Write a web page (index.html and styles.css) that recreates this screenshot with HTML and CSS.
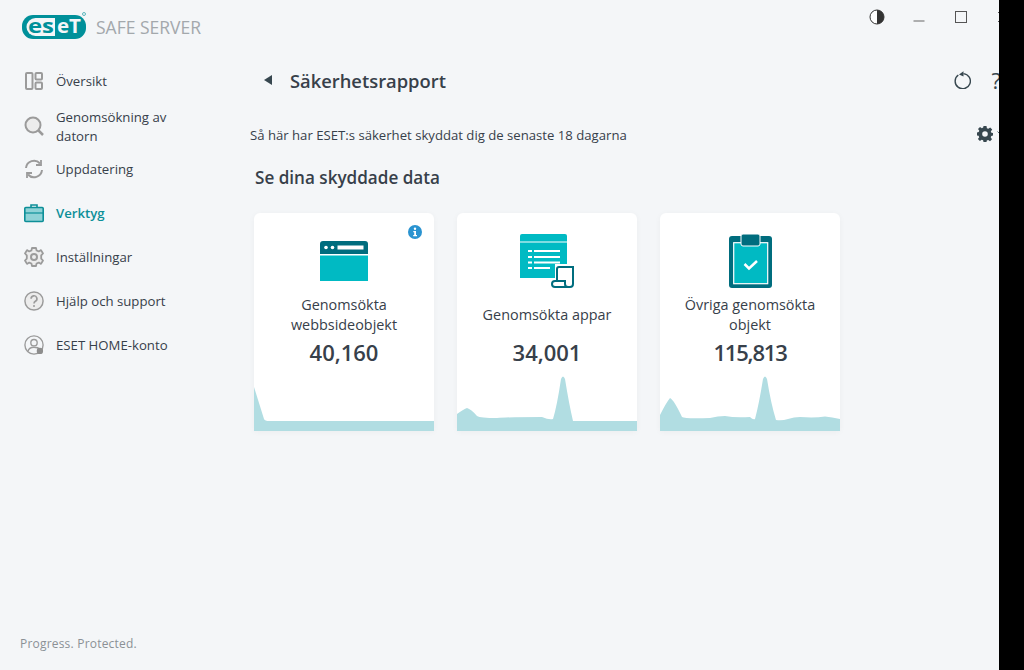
FILE: index.html
```html
<!DOCTYPE html>
<html lang="sv">
<head>
    <meta charset="UTF-8">
    <meta name="viewport" content="width=device-width, initial-scale=1.0">
    <title>Säkerhetsrapport</title>
    <link rel="stylesheet" href="styles.css">
</head>
<body>
    <div class="app">
        <aside class="sidebar">
            <div class="brand">
                <svg class="logo" width="66" height="30" viewBox="0 0 66 30">
                    <rect x="0" y="3" width="64" height="24" rx="11" fill="#00909a"/>
                    <path d="M13.500 6H33V24H13.500A9 9 0 0 1 13.500 6Z" fill="#f4f6f8"/>
                    <text x="6" y="21" class="logo-dark" textLength="26" lengthAdjust="spacingAndGlyphs">es</text>
                    <text x="35" y="21" class="logo-light" textLength="24" lengthAdjust="spacingAndGlyphs">eT</text>
                    <circle cx="62" cy="2" r="1.500" fill="none" stroke="#5fb8be" stroke-width="1"/>
                </svg>
                <span class="brand-name">SAFE SERVER</span>
            </div>
            <nav class="menu">
                <a class="menu-item">
                    <svg class="menu-icon" viewBox="0 0 20 20" fill="none" stroke="#9b9b9b" stroke-width="2"><rect x="2" y="2" width="6.500" height="16" rx="1"/><rect x="11.500" y="2" width="6.500" height="6.500" rx="1"/><rect x="11.500" y="11.500" width="6.500" height="6.500" rx="1"/></svg>
                    <span>Översikt</span>
                </a>
                <a class="menu-item tall">
                    <svg class="menu-icon" viewBox="0 0 20 20" fill="none" stroke="#9b9b9b"><circle cx="9" cy="9" r="7.500" stroke-width="2" fill="#ececec"/><path d="M14.500 14.500L19 19" stroke-width="2.500"/></svg>
                    <span>Genomsökning av datorn</span>
                </a>
                <a class="menu-item">
                    <svg class="menu-icon" viewBox="0 0 20 20" fill="none" stroke="#9b9b9b" stroke-width="2"><path d="M2 9A8 8 0 0 1 16 4.500"/><path d="M18 11A8 8 0 0 1 4 15.500"/><path d="M17 1V6H12" stroke-width="1.800"/><path d="M3 19V14H8" stroke-width="1.800"/></svg>
                    <span>Uppdatering</span>
                </a>
                <a class="menu-item active">
                    <svg class="menu-icon" viewBox="0 0 20 20"><path d="M7 4.500V2H13V4.500" fill="none" stroke="#0d8f98" stroke-width="1.600"/><rect x="0.800" y="4.500" width="18.400" height="14" rx="1" fill="#8fd2d6" stroke="#0d8f98" stroke-width="1.600"/><path d="M1 10H19" stroke="#0d8f98" stroke-width="1.200"/></svg>
                    <span>Verktyg</span>
                </a>
                <a class="menu-item">
                    <svg class="menu-icon" viewBox="0 0 20 20" fill="none" stroke="#9b9b9b"><path d="M8 1H12L12.600 3.500L14.800 4.400L17 3.100L19 6.500L17.200 8.400V11.600L19 13.500L17 16.900L14.800 15.600L12.600 16.500L12 19H8L7.400 16.500L5.200 15.600L3 16.900L1 13.500L2.800 11.600V8.400L1 6.500L3 3.100L5.200 4.400L7.400 3.500Z" stroke-width="1.800" stroke-linejoin="round" fill="#ececec"/><circle cx="10" cy="10" r="3" stroke-width="2"/></svg>
                    <span>Inställningar</span>
                </a>
                <a class="menu-item">
                    <svg class="menu-icon" viewBox="0 0 22 22" fill="none" stroke="#9b9b9b"><circle cx="11" cy="11" r="10" stroke-width="1.600" fill="#ececec"/><path d="M7.800 8.500A3.200 3.200 0 1 1 12.500 11.300C11.500 11.900 11 12.400 11 13.800" stroke-width="1.800"/><circle cx="11" cy="16.500" r="1.100" fill="#9b9b9b" stroke="none"/></svg>
                    <span>Hjälp och support</span>
                </a>
                <a class="menu-item">
                    <svg class="menu-icon" viewBox="0 0 22 22" fill="none" stroke="#9b9b9b"><circle cx="11" cy="11" r="10" stroke-width="1.500"/><circle cx="11" cy="8.500" r="3.500" stroke-width="1.500"/><path d="M4.500 18C5 14.500 8 13.500 11 13.500S16 14 17 15.500" stroke-width="1.500"/><circle cx="17.500" cy="17.500" r="3.500" fill="#8d8d8d" stroke="none"/></svg>
                    <span>ESET HOME-konto</span>
                </a>
            </nav>
            <div class="slogan">Progress. Protected.</div>
        </aside>

        <main class="content">
            <div class="window-controls">
                <svg class="win-btn" viewBox="0 0 16 16"><circle cx="8" cy="8" r="7" fill="#fff" stroke="#333" stroke-width="1"/><path d="M8 1A7 7 0 0 1 8 15Z" fill="#333"/></svg>
                <svg class="win-btn" viewBox="0 0 16 16"><path d="M2.500 12H13.500" stroke="#666" stroke-width="1"/></svg>
                <svg class="win-btn" viewBox="0 0 16 16"><rect x="2.500" y="2.500" width="11" height="11" fill="none" stroke="#555" stroke-width="1"/></svg>
                <svg class="win-btn" viewBox="0 0 16 16"><path d="M3 3L13 13M13 3L3 13" stroke="#555" stroke-width="1"/></svg>
            </div>

            <header class="page-head">
                <svg class="back" width="9" height="10" viewBox="0 0 9 10"><path d="M8 0V10L0 5Z" fill="#37474f"/></svg>
                <h1>Säkerhetsrapport</h1>
                <svg class="refresh" width="17" height="18" viewBox="0 0 17 18" fill="none"><path d="M9.500 2.600A7.600 7.600 0 1 1 4.300 4" stroke="#37474f" stroke-width="1.400"/><path d="M9.500 0.200V5.400L5 3.600Z" fill="#37474f"/></svg>
                <span class="help">?</span>
            </header>

            <div class="desc-row">
                <p class="desc">Så här har ESET:s säkerhet skyddat dig de senaste 18 dagarna</p>
                <div class="settings">
                    <svg width="16" height="16" viewBox="0 0 16 16"><path fill="#37474f" fill-rule="evenodd" d="M6.500 0H9.500L9.900 2.200L11.300 2.800L13.200 1.500L15.200 3.600L13.800 5.400L14.400 6.800L16 7V9.500L14.300 9.900L13.700 11.300L15 13.200L13 15.200L11.200 13.900L9.800 14.400L9.500 16H6.500L6.100 14.300L4.700 13.700L2.900 15L0.900 13L2.200 11.200L1.600 9.800L0 9.500V6.500L1.700 6.100L2.300 4.700L1 2.900L3 1L4.800 2.200L6.200 1.600ZM8 5.200A2.800 2.800 0 1 0 8 10.800A2.800 2.800 0 1 0 8 5.200Z"/></svg>
                    <svg width="7" height="5" viewBox="0 0 7 5"><path d="M0.500 0.500L3.500 3.500L6.500 0.500" fill="none" stroke="#5a6a72" stroke-width="1"/></svg>
                </div>
            </div>

            <h2>Se dina skyddade data</h2>

            <section class="cards">
                <article class="card">
                    <svg class="info" width="14" height="14" viewBox="0 0 14 14"><circle cx="7" cy="7" r="7" fill="#2a93d0"/><circle cx="7" cy="3.700" r="1.200" fill="#fff"/><path d="M5.300 6H8V10H9V11.200H5.200V10H6.200V7.200H5.300Z" fill="#fff"/></svg>
                    <div class="card-icon">
                        <svg width="48" height="40" viewBox="0 0 48 40">
                            <path d="M0 3A3 3 0 0 1 3 0H45A3 3 0 0 1 48 3V13H0Z" fill="#006d7e"/>
                            <rect x="0" y="14.500" width="48" height="25.500" fill="#00bac3"/>
                            <circle cx="6" cy="6.500" r="1.800" fill="#fff"/><circle cx="12.500" cy="6.500" r="1.800" fill="#fff"/>
                            <rect x="17.500" y="4.500" width="26" height="4" fill="#fff"/>
                        </svg>
                    </div>
                    <div class="card-label">Genomsökta webbsideobjekt</div>
                    <div class="card-value">40,160</div>
                    <svg class="graph" width="180" height="55" viewBox="0 0 180 55"><path d="M0 55V11L10 43Q11 45 15 45H180V55Z" fill="#b1dde2"/></svg>
                </article>

                <article class="card">
                    <div class="card-icon">
                        <svg width="54" height="54" viewBox="0 0 54 54">
                            <path d="M0 2A2 2 0 0 1 2 0H45A2 2 0 0 1 47 2V7.500H0Z" fill="#00bac3"/>
                            <path d="M0 8.500H47V44H0Z" fill="#00bac3"/>
                            <g fill="#fff">
                                <rect x="8" y="16" width="4" height="2"/><rect x="14" y="16" width="26" height="2"/>
                                <rect x="8" y="22" width="4" height="2"/><rect x="14" y="22" width="26" height="2"/>
                                <rect x="8" y="27.500" width="4" height="2"/><rect x="14" y="27.500" width="26" height="2"/>
                                <rect x="8" y="33" width="4" height="2"/><rect x="14" y="33" width="16" height="2"/>
                            </g>
                            <path d="M35 30H54V54H30V44H35Z" fill="#fff"/>
                            <path d="M37 46V35A2 2 0 0 1 39 33H53V50A3 3 0 0 1 50 53H35A3 3 0 0 1 35 47H45V50A3 3 0 0 0 48 53" fill="none" stroke="#006d7e" stroke-width="2"/>
                        </svg>
                    </div>
                    <div class="card-label one-line">Genomsökta appar</div>
                    <div class="card-value">34,001</div>
                    <svg class="graph" width="180" height="55" viewBox="0 0 180 55"><path d="M0 55V38Q7 33 10 32Q14 33 20 40Q23 42 40 42Q50 41 85 41Q92 44 96 43Q100 30 104 3Q106 -2 108 3Q112 28 116 45H180V55Z" fill="#b1dde2"/></svg>
                </article>

                <article class="card">
                    <div class="card-icon">
                        <svg width="43" height="54" viewBox="0 0 43 54">
                            <rect x="0" y="2" width="43" height="52" rx="3" fill="#006d7e"/>
                            <rect x="4.700" y="8.700" width="34" height="41" fill="#00bac3" stroke="#fff" stroke-width="1.200"/>
                            <path d="M12 2A2 2 0 0 1 14 0H29A2 2 0 0 1 31 2V10A2 2 0 0 1 29 12H14A2 2 0 0 1 12 10Z" fill="#006d7e" stroke="#fff" stroke-width="1"/>
                            <path d="M15.500 30L20 34.500L28 27" fill="none" stroke="#fff" stroke-width="2.500"/>
                        </svg>
                    </div>
                    <div class="card-label">Övriga genomsökta objekt</div>
                    <div class="card-value tight">115,813</div>
                    <svg class="graph" width="180" height="55" viewBox="0 0 180 55"><path d="M0 55V39Q6 27 10 22Q14 24 22 41Q25 43 50 42Q58 40 65 40Q75 42 90 41Q93 44 95 43Q99 28 103 3Q105 -2 107 3Q111 28 116 44Q122 45 128 43Q134 41 140 41Q155 42 165 40.500Q172 41 180 43V55Z" fill="#b1dde2"/></svg>
                </article>
            </section>
        </main>
    </div>
    <div class="edge"></div>
</body>
</html>
```

FILE: styles.css
```css
* {
    box-sizing: border-box;
}

html, body {
    height: 100%;
}

body {
    margin: 0;
    background-color: #f4f6f8;
    color: #37404a;
    font-family: "Open Sans", "Noto Sans", sans-serif;
    overflow: hidden;
}

.app {
    display: flex;
    height: 670px;
    width: 1024px;
}

/* sidebar */
.sidebar {
    width: 240px;
    flex-shrink: 0;
    display: flex;
    flex-direction: column;
    padding: 12px 0 18px;
}

.brand {
    display: flex;
    align-items: center;
    gap: 8px;
    padding-left: 22px;
    height: 30px;
    margin-bottom: 17px;
}

.logo-dark {
    font: 700 20px "Open Sans", sans-serif;
    fill: #00909a;
}

.logo-light {
    font: 700 20px "Open Sans", sans-serif;
    fill: #f4f6f8;
}

.brand-name {
    font-size: 17.5px;
    color: #a3a8ac;
}

.menu {
    display: flex;
    flex-direction: column;
}

.menu-item {
    display: flex;
    align-items: center;
    gap: 12px;
    height: 44px;
    padding-left: 24px;
    font-size: 13.2px;
    line-height: 19px;
}

.menu-item span {
    max-width: 125px;
}

.menu-item.tall {
    padding-top: 2px;
}

.menu-item.tall span {
    margin-top: 2px;
}

.menu-item.active {
    color: #0d8f98;
    font-weight: 600;
}

.menu-icon {
    width: 20px;
    height: 20px;
    flex-shrink: 0;
}

.slogan {
    margin-top: auto;
    padding-left: 20px;
    font-size: 12px;
    color: #8b9196;
    letter-spacing: 0.2px;
}

/* main part */
.content {
    flex: 1;
    min-width: 0;
}

.window-controls {
    display: flex;
    justify-content: flex-end;
    gap: 26px;
    padding: 9px 13px 0 0;
    height: 59px;
}

.win-btn {
    width: 16px;
    height: 16px;
}

.page-head {
    display: flex;
    align-items: center;
    height: 42px;
    padding-left: 24px;
}

.page-head h1 {
    margin: 0 0 0 17px;
    font-size: 18.35px;
    font-weight: 600;
    color: #37404a;
}

.refresh {
    margin-left: auto;
}

.help {
    margin: 0 23px 0 21px;
    font-size: 22px;
    color: #37474f;
}

.desc-row {
    display: flex;
    align-items: center;
    justify-content: space-between;
    margin-top: 23px;
    padding: 0 20px 0 10px;
    height: 22px;
}

.desc {
    margin: 0;
    font-size: 13.15px;
}

.settings {
    display: flex;
    align-items: center;
    gap: 4px;
    margin-bottom: 3px;
}

.content h2 {
    margin: 20px 0 0 15px;
    font-size: 17.1px;
    font-weight: 600;
    line-height: 24px;
}

.cards {
    display: flex;
    gap: 23px;
    margin: 23px 0 0 14px;
}

.card {
    position: relative;
    width: 180px;
    height: 218px;
    background-color: #fff;
    border-radius: 6px 6px 0 0;
    box-shadow: 0 1px 6px rgba(0, 0, 0, 0.04);
    display: flex;
    flex-direction: column;
    align-items: center;
    padding: 20px 8px 0;
    text-align: center;
    overflow: hidden;
}

.card-icon {
    height: 56px;
    margin-bottom: 6px;
    display: flex;
    align-items: center;
}

.card-label {
    font-size: 14.4px;
    line-height: 20px;
    height: 40px;
}

.card-label.one-line {
    line-height: 40px;
}

.card-value {
    margin-top: 2px;
    font-size: 22px;
    font-weight: 600;
    line-height: 30px;
}

.card-value.tight {
    letter-spacing: -1.2px;
}

.info {
    position: absolute;
    top: 12px;
    right: 12px;
}

.graph {
    position: absolute;
    left: 0;
    bottom: 0;
    display: block;
}

/* black strip on the right of the capture */
.edge {
    position: absolute;
    top: 0;
    right: 0;
    width: 25px;
    height: 670px;
    background-color: #000;
}
```
